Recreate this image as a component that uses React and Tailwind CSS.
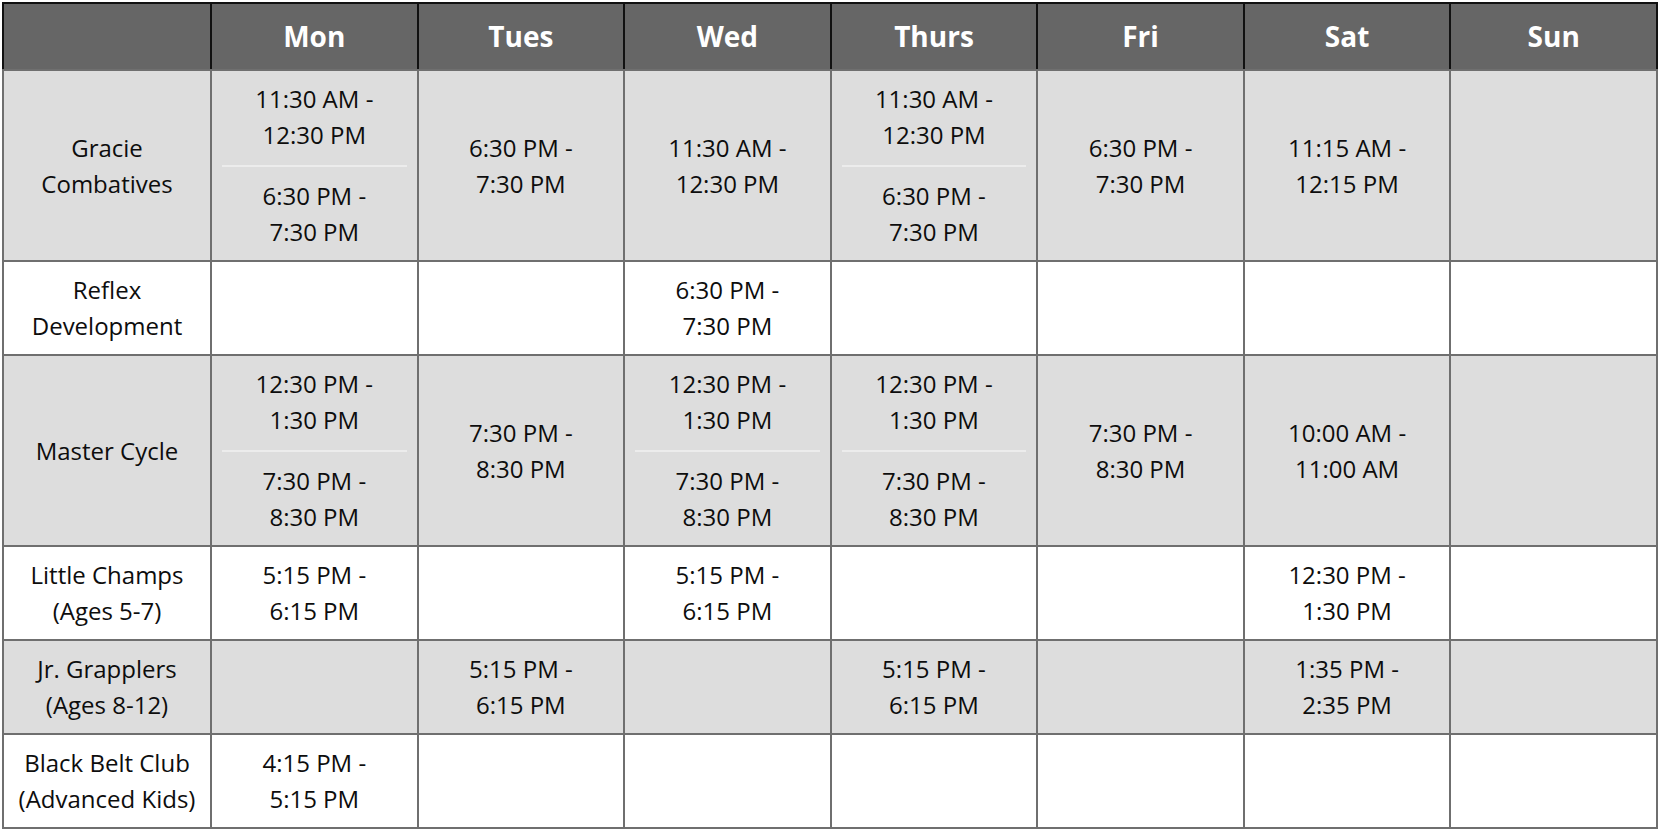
import React from 'react';

const days = ['Mon', 'Tues', 'Wed', 'Thurs', 'Fri', 'Sat', 'Sun'];

const schedule = [
  {
    name: 'Gracie Combatives',
    times: [
      ['11:30 AM - 12:30 PM', '6:30 PM - 7:30 PM'],
      ['6:30 PM - 7:30 PM'],
      ['11:30 AM - 12:30 PM'],
      ['11:30 AM - 12:30 PM', '6:30 PM - 7:30 PM'],
      ['6:30 PM - 7:30 PM'],
      ['11:15 AM - 12:15 PM'],
      [],
    ],
  },
  {
    name: 'Reflex Development',
    times: [[], [], ['6:30 PM - 7:30 PM'], [], [], [], []],
  },
  {
    name: 'Master Cycle',
    times: [
      ['12:30 PM - 1:30 PM', '7:30 PM - 8:30 PM'],
      ['7:30 PM - 8:30 PM'],
      ['12:30 PM - 1:30 PM', '7:30 PM - 8:30 PM'],
      ['12:30 PM - 1:30 PM', '7:30 PM - 8:30 PM'],
      ['7:30 PM - 8:30 PM'],
      ['10:00 AM - 11:00 AM'],
      [],
    ],
  },
  {
    name: 'Little Champs (Ages 5-7)',
    times: [['5:15 PM - 6:15 PM'], [], ['5:15 PM - 6:15 PM'], [], [], ['12:30 PM - 1:30 PM'], []],
  },
  {
    name: 'Jr. Grapplers (Ages 8-12)',
    times: [[], ['5:15 PM - 6:15 PM'], [], ['5:15 PM - 6:15 PM'], [], ['1:35 PM - 2:35 PM'], []],
  },
  {
    name: 'Black Belt Club (Advanced Kids)',
    times: [['4:15 PM - 5:15 PM'], [], [], [], [], [], []],
  },
];

const TimeSlots = ({ slots }) => (
  <div>
    {slots.map((slot, i) => {
      const [start, end] = slot.split(' - ');
      return (
        <div
          key={slot}
          className={i < slots.length - 1 ? 'pb-3 mb-[11px] border-b-2 border-[#ececec]' : ''}
        >
          {start} -
          <br />
          {end}
        </div>
      );
    })}
  </div>
);

const App = () => {
  return (
    <div className="min-h-screen bg-white pl-[2px] pt-[2px]" style={{ fontFamily: '"Open Sans", sans-serif' }}>
      <table className="table-fixed border-collapse w-[1656px] text-center text-[24px] leading-[36px] text-[#0d0d0d]">
        <colgroup>
          <col className="w-[208px]" />
          {days.map((d) => (
            <col key={d} />
          ))}
        </colgroup>
        <thead>
          <tr className="bg-[#666666]">
            <th className="border-2 border-[#111] border-b-[#6f6f6f] h-[67px] p-0" />
            {days.map((d) => (
              <th
                key={d}
                className="border-2 border-[#111] border-b-[#6f6f6f] h-[67px] p-0 pb-[2px] text-[28px] font-bold text-white"
              >
                {d}
              </th>
            ))}
          </tr>
        </thead>
        <tbody>
          {schedule.map((row, r) => (
            <tr key={row.name} className={r % 2 === 0 ? 'bg-[#dddddd]' : 'bg-white'}>
              <td className="border-2 border-[#6f6f6f] px-[10px] py-[10px] align-middle">{row.name}</td>
              {row.times.map((slots, c) => (
                <td key={c} className="border-2 border-[#6f6f6f] px-[10px] py-[10px] align-middle">
                  <TimeSlots slots={slots} />
                </td>
              ))}
            </tr>
          ))}
        </tbody>
      </table>
    </div>
  );
};

export default App;
